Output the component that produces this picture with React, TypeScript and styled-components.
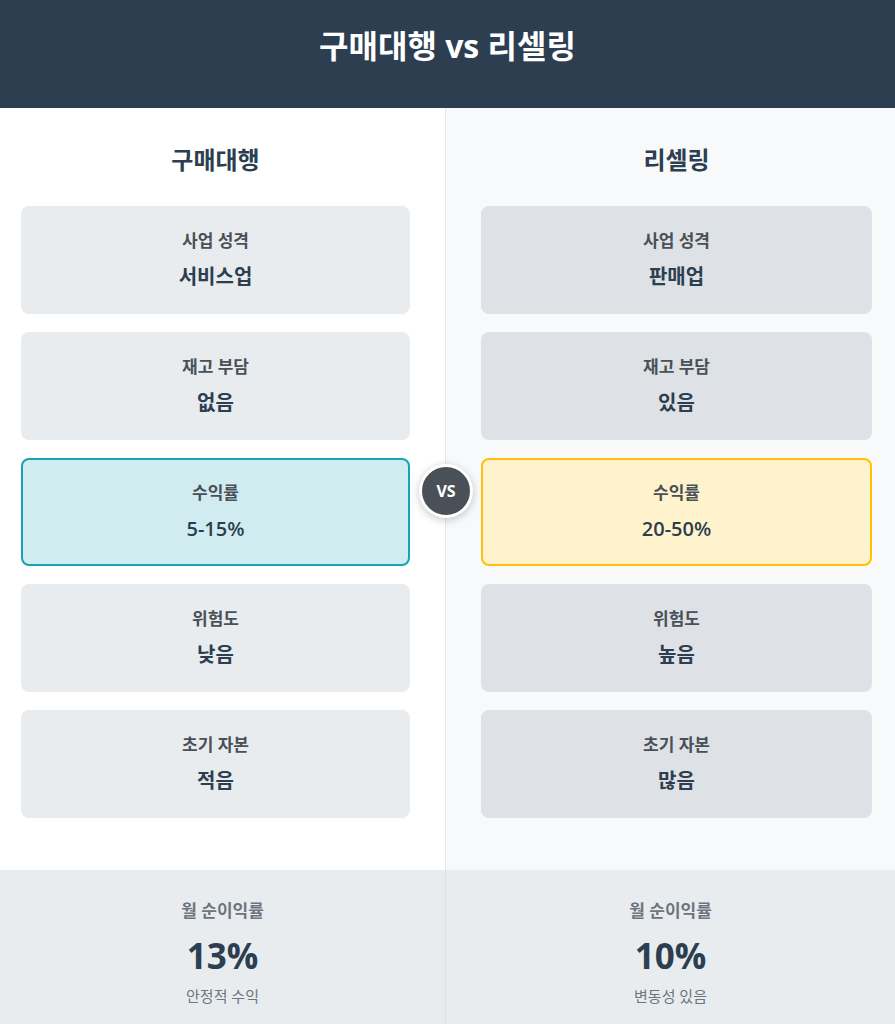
import React from 'react';
import styled, { createGlobalStyle } from 'styled-components';

const GlobalStyle = createGlobalStyle`
    * {
        box-sizing: border-box;
    }

    body {
        margin: 0;
        background: #ffffff;
        font-family: "Open Sans", "Noto Sans CJK KR", sans-serif;
        color: #2c3e50;
    }
`

type Side = 'left' | 'right';

interface SideProps {
    side: Side;
}

interface CardProps {
    side: Side;
    highlight?: boolean;
}

const Page = styled.div`
    width: 100%;
    min-height: 1024px;
    display: flex;
    flex-direction: column;
`

const Header = styled.header`
    height: 108px;
    background: #2c3e50;
    padding-top: 24px;
    text-align: center;

    h1 {
        margin: 0;
        color: #ffffff;
        font-size: 32px;
        line-height: 44px;
        font-weight: 700;
    }
`

const Comparison = styled.section`
    position: relative;
    display: grid;
    grid-template-columns: 445px 1fr;
`

const Column = styled.div<SideProps>`
    display: flex;
    flex-direction: column;
    gap: 18px;
    padding: ${p => (p.side === 'left' ? '37px 35px 52px 21px' : '37px 23px 52px 35px')};
    background: ${p => (p.side === 'left' ? '#ffffff' : '#f8f9fa')};
    border-left: ${p => (p.side === 'right' ? '1px solid #e3e7ea' : 'none')};

    h2 {
        margin: 0 0 13px;
        text-align: center;
        font-size: 24px;
        line-height: 30px;
        font-weight: 700;
        color: #2c3e50;
    }
`

const highlightBg = (side: Side) => (side === 'left' ? '#d1ecf1' : '#fff3cd');
const highlightBorder = (side: Side) => (side === 'left' ? '#17a2b8' : '#ffc107');

const Card = styled.div<CardProps>`
    height: 108px;
    border-radius: 8px;
    display: flex;
    flex-direction: column;
    align-items: center;
    justify-content: center;
    background: ${p => (p.highlight ? highlightBg(p.side) : p.side === 'left' ? '#e9ecef' : '#dee2e6')};
    border: 2px solid ${p => (p.highlight ? highlightBorder(p.side) : 'transparent')};

    .label {
        font-size: 17px;
        line-height: 24px;
        font-weight: 600;
        color: #495057;
    }

    .value {
        margin-top: 10px;
        font-size: 20px;
        line-height: 28px;
        font-weight: ${p => (p.highlight ? 600 : 700)};
        color: #2c3e50;
    }
`

const VsBadge = styled.div`
    position: absolute;
    left: 446px;
    top: calc(50% + 2px);
    transform: translate(-50%, -50%);
    width: 54px;
    height: 54px;
    border-radius: 50%;
    background: #495057;
    border: 3px solid #ffffff;
    box-shadow: 0 2px 8px rgba(0, 0, 0, 0.22);
    display: flex;
    align-items: center;
    justify-content: center;
    color: #ffffff;
    font-size: 16px;
    font-weight: 700;
    z-index: 2;
`

const Summary = styled.section`
    display: grid;
    grid-template-columns: 445px 1fr;
    background: #e9ecef;
    height: 155px;
`

const SummaryItem = styled.div<SideProps>`
    display: flex;
    flex-direction: column;
    align-items: center;
    padding-top: 29px;
    border-left: ${p => (p.side === 'right' ? '1px solid #dde1e5' : 'none')};

    .label {
        font-size: 17px;
        line-height: 24px;
        font-weight: 600;
        color: #6c757d;
    }

    .number {
        margin-top: 10px;
        font-size: 35px;
        line-height: 46px;
        font-weight: 700;
        color: #2c3e50;
    }

    .note {
        margin-top: 7px;
        font-size: 15px;
        line-height: 20px;
        color: #6c757d;
    }
`

interface Row {
    label: string;
    value: string;
    highlight?: boolean;
}

const columns: { side: Side; title: string; rows: Row[] }[] = [
    {
        side: 'left',
        title: '구매대행',
        rows: [
            { label: '사업 성격', value: '서비스업' },
            { label: '재고 부담', value: '없음' },
            { label: '수익률', value: '5-15%', highlight: true },
            { label: '위험도', value: '낮음' },
            { label: '초기 자본', value: '적음' },
        ],
    },
    {
        side: 'right',
        title: '리셀링',
        rows: [
            { label: '사업 성격', value: '판매업' },
            { label: '재고 부담', value: '있음' },
            { label: '수익률', value: '20-50%', highlight: true },
            { label: '위험도', value: '높음' },
            { label: '초기 자본', value: '많음' },
        ],
    },
];

const summaries: { side: Side; number: string; note: string }[] = [
    { side: 'left', number: '13%', note: '안정적 수익' },
    { side: 'right', number: '10%', note: '변동성 있음' },
];

export default function App() {
    return (
        <Page>
            <GlobalStyle />
            <Header>
                <h1>구매대행 vs 리셀링</h1>
            </Header>

            <Comparison>
                {columns.map(col => (
                    <Column key={col.side} side={col.side}>
                        <h2>{col.title}</h2>
                        {col.rows.map(row => (
                            <Card key={row.label} side={col.side} highlight={row.highlight}>
                                <div className="label">{row.label}</div>
                                <div className="value">{row.value}</div>
                            </Card>
                        ))}
                    </Column>
                ))}
                <VsBadge>VS</VsBadge>
            </Comparison>

            <Summary>
                {summaries.map(s => (
                    <SummaryItem key={s.side} side={s.side}>
                        <div className="label">월 순이익률</div>
                        <div className="number">{s.number}</div>
                        <div className="note">{s.note}</div>
                    </SummaryItem>
                ))}
            </Summary>
        </Page>
    );
}
